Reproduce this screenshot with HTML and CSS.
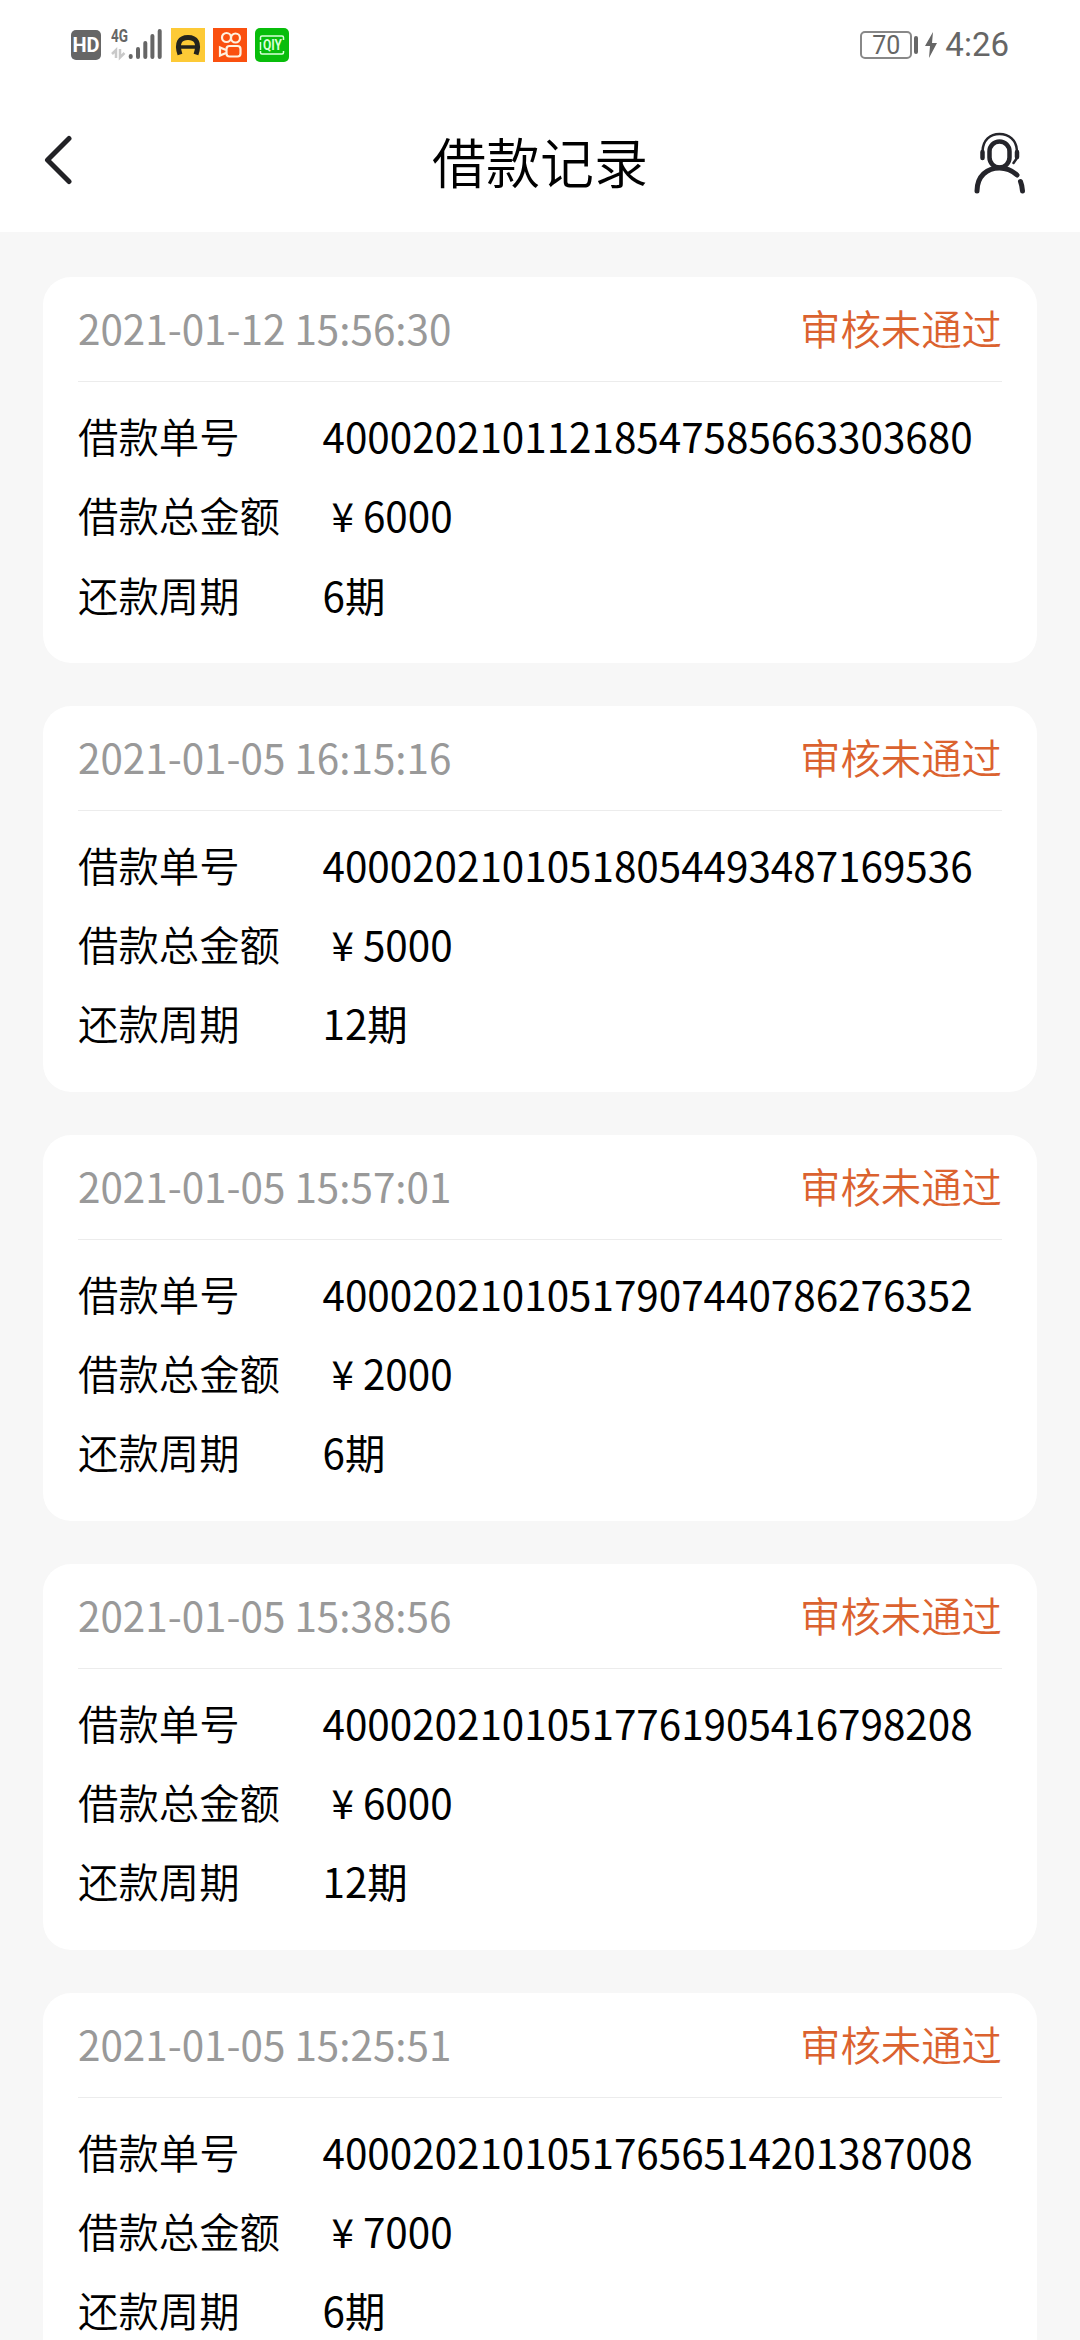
FILE: index.html
```html
<!DOCTYPE html>
<html lang="zh-CN">
<head>
    <meta charset="UTF-8">
    <meta name="viewport" content="width=device-width, initial-scale=1.0">
    <title>借款记录</title>
    <link rel="stylesheet" href="styles.css">
</head>
<body>

    <div class="status-bar">
        <div class="status-left">
            <span class="hd">HD</span>
            <svg class="signal" width="52" height="42" viewBox="0 -8 52 42">
                <text class="network" x="0" y="13.500" textLength="17" lengthAdjust="spacingAndGlyphs">4G</text>
                <path d="M1 26l4-4v8M9 21v8.500l4.500-4.500" fill="none" stroke="#c9c9c9" stroke-width="2.500"/>
                <path d="M19.700 28v1M27 21v8M34.300 15v14M41.400 8v21M48.700 3v26" stroke="#666" stroke-width="4" stroke-linecap="round"/>
            </svg>
            <svg class="app" width="34" height="34" viewBox="0 0 34 34">
                <rect width="34" height="34" fill="#fdca36"/>
                <path d="M9 26.500C5 15 9 9.500 17 9.500S29 15 25 26.500" fill="none" stroke="#24231d" stroke-width="5"/>
                <path d="M8 19h18" fill="none" stroke="#24231d" stroke-width="3.500"/>
            </svg>
            <svg class="app" width="34" height="34" viewBox="0 0 34 34">
                <rect width="34" height="34" fill="#fa500f"/>
                <g fill="none" stroke="#fff1df" stroke-width="2.200">
                    <circle cx="13.500" cy="9.500" r="4.500"/>
                    <circle cx="22.500" cy="10" r="4.500"/>
                    <rect x="13.500" y="18" width="14" height="10.500" rx="3"/>
                    <path d="M13 22l-6-2.500v8l6-2.500"/>
                </g>
            </svg>
            <svg class="app" width="34" height="34" viewBox="0 0 34 34">
                <rect width="34" height="34" rx="5" fill="#08bd0b"/>
                <path d="M5.500 12V9.500q0-1.500 1.500-1.500h20q1.500 0 1.500 1.500V12M5.500 23v1.500q0 1.500 1.500 1.500h20q1.500 0 1.500-1.500V23M5.500 14v8" fill="none" stroke="#d8ffd8" stroke-width="1.500"/>
                <text class="qiy" x="8" y="22" textLength="19" lengthAdjust="spacingAndGlyphs">QIY</text>
            </svg>
        </div>
        <div class="status-right">
            <span class="battery">70</span>
            <span class="battery-cap"></span>
            <svg class="bolt" width="12" height="26" viewBox="0 0 12 26">
                <path d="M8 0L0 14h5L4 26l8-15H7z" fill="#666"/>
            </svg>
            <span class="clock">4:26</span>
        </div>
    </div>

    <header>
        <svg class="back" width="30" height="50" viewBox="0 0 30 50">
            <path d="M25 3.500L3.500 25L25 46.500" fill="none" stroke="#222226" stroke-width="5" stroke-linecap="round" stroke-linejoin="round"/>
        </svg>
        <h1>借款记录</h1>
        <svg class="service" width="52" height="64" viewBox="0 0 52 64">
            <g fill="none" stroke="#25252b" stroke-linecap="round">
                <rect x="15.500" y="9.500" width="20" height="26" rx="10" stroke-width="4.500"/>
                <path d="M3 59C3 44 13 36 25.500 36C32 36 38 38.500 43 43" stroke-width="5"/>
                <path d="M46.500 49.500Q48 53 48.500 59" stroke-width="5"/>
                <path d="M8.500 19C9 8 16 2 25.500 2S42.500 8 43 19" stroke-width="2.500"/>
                <path d="M8.500 20v6M43 20v5" stroke-width="4.500"/>
                <path d="M43 26l-3.500 5" stroke-width="2.500"/>
            </g>
        </svg>
    </header>

    <div class="list">
        <div class="card">
            <div class="card-head">
                <span class="date">2021-01-12 15:56:30</span>
                <span class="state">审核未通过</span>
            </div>
            <dl>
                <dt>借款单号</dt><dd>40002021011218547585663303680</dd>
                <dt>借款总金额</dt><dd><span class="yen">¥</span>6000</dd>
                <dt>还款周期</dt><dd>6期</dd>
            </dl>
        </div>

        <div class="card">
            <div class="card-head">
                <span class="date">2021-01-05 16:15:16</span>
                <span class="state">审核未通过</span>
            </div>
            <dl>
                <dt>借款单号</dt><dd>40002021010518054493487169536</dd>
                <dt>借款总金额</dt><dd><span class="yen">¥</span>5000</dd>
                <dt>还款周期</dt><dd>12期</dd>
            </dl>
        </div>

        <div class="card">
            <div class="card-head">
                <span class="date">2021-01-05 15:57:01</span>
                <span class="state">审核未通过</span>
            </div>
            <dl>
                <dt>借款单号</dt><dd>40002021010517907440786276352</dd>
                <dt>借款总金额</dt><dd><span class="yen">¥</span>2000</dd>
                <dt>还款周期</dt><dd>6期</dd>
            </dl>
        </div>

        <div class="card">
            <div class="card-head">
                <span class="date">2021-01-05 15:38:56</span>
                <span class="state">审核未通过</span>
            </div>
            <dl>
                <dt>借款单号</dt><dd>40002021010517761905416798208</dd>
                <dt>借款总金额</dt><dd><span class="yen">¥</span>6000</dd>
                <dt>还款周期</dt><dd>12期</dd>
            </dl>
        </div>

        <div class="card">
            <div class="card-head">
                <span class="date">2021-01-05 15:25:51</span>
                <span class="state">审核未通过</span>
            </div>
            <dl>
                <dt>借款单号</dt><dd>40002021010517656514201387008</dd>
                <dt>借款总金额</dt><dd><span class="yen">¥</span>7000</dd>
                <dt>还款周期</dt><dd>6期</dd>
            </dl>
        </div>
    </div>

</body>
</html>
```
FILE: styles.css
```css
* {
    box-sizing: border-box;
}

body {
    margin: 0;
    height: 2340px;
    overflow: hidden;
    background-color: #f7f7f7;
    color: #000;
    font-family: "Noto Sans CJK SC", sans-serif;
    font-size: 40.4px;
    font-weight: 350;
}

.status-bar {
    display: flex;
    justify-content: space-between;
    height: 90px;
    padding: 28px 71px 0;
    background-color: #fff;
    color: #666;
    font-family: Roboto, sans-serif;
    font-weight: 400;
}

.status-left, .status-right {
    display: flex;
    align-items: flex-start;
    height: 34px;
}

.hd {
    width: 30px;
    height: 30px;
    margin: 2px 10px 0 0;
    border-radius: 5px;
    background-color: #666;
    color: #fff;
    font: bold 20px/30px Roboto, sans-serif;
    text-align: center;
}

.signal {
    margin-top: -8px;
}

.network {
    font: bold 18px Roboto, sans-serif;
    fill: #666;
}

.app {
    margin-left: 8px;
}

.qiy {
    font: bold 14px Roboto, sans-serif;
    fill: #d8ffd8;
}

.status-right {
    align-items: center;
}

.battery {
    width: 52px;
    height: 28px;
    border: 2px solid #888;
    border-radius: 5px;
    font-size: 25px;
    line-height: 25px;
    text-align: center;
}

.battery-cap {
    width: 4px;
    height: 18px;
    margin: 0 7px 0 2px;
    border-radius: 2px;
    background-color: #666;
}

.clock {
    margin-left: 8px;
    font-size: 33px;
    line-height: 36px;
}

header {
    display: flex;
    align-items: center;
    justify-content: space-between;
    height: 142px;
    padding: 0 54px 0 44px;
    background-color: #fff;
}

.back {
    margin: 0 32px 3px 0;
}

.service {
    margin-top: 6px;
}

h1 {
    margin: 0;
    font-size: 54px;
    font-weight: 350;
    line-height: 78px;
}

.list {
    display: flex;
    flex-direction: column;
    gap: 43px;
    padding: 45px 43px 0;
}

.card {
    flex: none;
    height: 385.9px;
    padding: 0 35px;
    border-radius: 28px;
    background-color: #fff;
}

.card-head {
    display: flex;
    justify-content: space-between;
    height: 105px;
    border-bottom: 1px solid #ececec;
    line-height: 102px;
}

.date {
    color: #999;
    font-weight: 400;
}

.state {
    color: #db622f;
}

dl {
    display: grid;
    grid-template-columns: 244.5px 1fr;
    grid-auto-rows: 79.3px;
    margin: 0;
    padding-top: 14px;
    line-height: 79px;
}

dd {
    margin: 0;
    font-weight: 400;
}

.yen {
    display: inline-block;
    width: 1em;
    text-align: center;
}
```
